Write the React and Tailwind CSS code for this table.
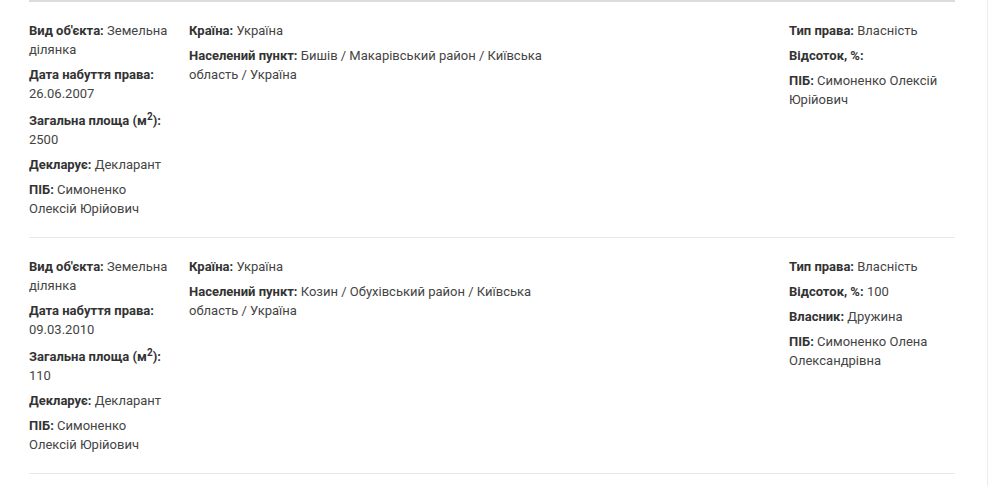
import React from 'react';

const rows = [
    {
        left: [
            { label: "Вид об'єкта:", value: 'Земельна ділянка' },
            { label: 'Дата набуття права:', value: '26.06.2007' },
            { label: 'area', value: '2500' },
            { label: 'Декларує:', value: 'Декларант' },
            { label: 'ПІБ:', value: 'Симоненко Олексій Юрійович' },
        ],
        mid: [
            { label: 'Країна:', value: 'Україна' },
            { label: 'Населений пункт:', value: 'Бишів / Макарівський район / Київська область / Україна' },
        ],
        right: [
            { label: 'Тип права:', value: 'Власність' },
            { label: 'Відсоток, %:', value: '' },
            { label: 'ПІБ:', value: 'Симоненко Олексій Юрійович' },
        ],
    },
    {
        left: [
            { label: "Вид об'єкта:", value: 'Земельна ділянка' },
            { label: 'Дата набуття права:', value: '09.03.2010' },
            { label: 'area', value: '110' },
            { label: 'Декларує:', value: 'Декларант' },
            { label: 'ПІБ:', value: 'Симоненко Олексій Юрійович' },
        ],
        mid: [
            { label: 'Країна:', value: 'Україна' },
            { label: 'Населений пункт:', value: 'Козин / Обухівський район / Київська область / Україна' },
        ],
        right: [
            { label: 'Тип права:', value: 'Власність' },
            { label: 'Відсоток, %:', value: '100' },
            { label: 'Власник:', value: 'Дружина' },
            { label: 'ПІБ:', value: 'Симоненко Олена Олександрівна' },
        ],
    },
];

const Field = ({ label, value }) => (
    <div className={`mb-[6px] leading-[19px] ${label === 'area' ? 'pt-[2px]' : ''}`}>
        {label === 'area' ? (
            <b className="font-bold text-[#333]">
                Загальна площа (м<sup className="text-[10px]">2</sup>):
            </b>
        ) : (
            <b className="font-bold text-[#333]">{label}</b>
        )}{' '}
        {value}
    </div>
);

const Row = ({ row }) => (
    <div className="flex border-b border-[#e8e8e8] pt-[19px] pb-[13px]">
        <div className="w-[160px] pr-[15px]">
            {row.left.map((f, i) => <Field key={i} {...f} />)}
        </div>
        <div className="w-[384px] pr-[16px]">
            {row.mid.map((f, i) => <Field key={i} {...f} />)}
        </div>
        <div className="flex-1" />
        <div className="w-[166px]">
            {row.right.map((f, i) => <Field key={i} {...f} />)}
        </div>
    </div>
);

export default function App() {
    return (
        <div
            className="w-[988px] h-[486px] bg-white border-r border-[#ececec] text-[13px] text-[#444]"
            style={{ fontFamily: 'Roboto, "Liberation Sans", sans-serif' }}
        >
            <div className="w-[926px] ml-[29px] border-t-[2px] border-[#dcdcdc]">
                {rows.map((row, i) => <Row key={i} row={row} />)}
            </div>
        </div>
    );
}
